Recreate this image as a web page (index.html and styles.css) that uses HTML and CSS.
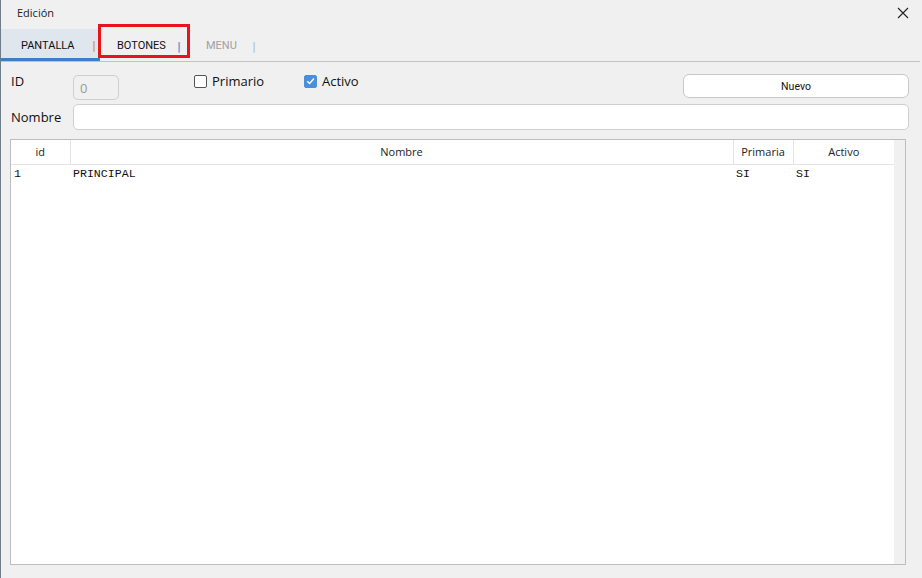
FILE: index.html
```html
<!DOCTYPE html>
<html lang="es">
<head>
  <meta charset="UTF-8">
  <title>Edición</title>
  <link rel="stylesheet" href="styles.css">
</head>
<body>
<div class="window">
  <div class="titlebar">
    <span class="title">Edición</span>
    <svg class="close" width="12" height="12" viewBox="0 0 12 12"><path d="M1 1 L11 11 M11 1 L1 11" stroke="#222" stroke-width="1.1" fill="none"/></svg>
  </div>

  <div class="tabs">
    <div class="tab tab-active"><span>PANTALLA</span><span class="sep sep-orange">|</span></div>
    <div class="tab"><span>BOTONES</span><span class="sep sep-blue">|</span></div>
    <div class="tab tab-off"><span>MENU</span><span class="sep sep-light">|</span></div>
    <div class="highlight"></div>
  </div>

  <div class="form">
    <div class="row row-top">
      <label class="lbl">ID</label>
      <input class="txt txt-id" type="text" value="0" disabled>
      <label class="check check-primario"><span class="box"></span>Primario</label>
      <label class="check"><span class="box box-on">
        <svg width="12" height="12" viewBox="0 0 12 12"><path d="M2.5 6.2 L5 8.7 L9.8 3.2" stroke="#fff" stroke-width="1.6" fill="none"/></svg>
      </span>Activo</label>
      <button class="btn">Nuevo</button>
    </div>
    <div class="row row-name">
      <label class="lbl">Nombre</label>
      <input class="txt txt-name" type="text">
    </div>
  </div>

  <div class="grid">
    <div class="grid-body">
      <table>
        <thead>
          <tr>
            <th class="c-id">id</th>
            <th class="c-name">Nombre</th>
            <th class="c-prim">Primaria</th>
            <th class="c-act">Activo</th>
          </tr>
        </thead>
        <tbody>
          <tr>
            <td>1</td>
            <td>PRINCIPAL</td>
            <td>SI</td>
            <td>SI</td>
          </tr>
        </tbody>
      </table>
    </div>
    <div class="scroll"></div>
  </div>
</div>
</body>
</html>
```

FILE: styles.css
```css
body {
  margin: 0;
  background: #f0f0f0;
  font-family: 'Open Sans', 'Noto Sans', sans-serif;
  color: #1a1a1a;
}

.window {
  width: 921px;
  height: 578px;
  border-left: 1px solid #6f7c8a;
  display: flex;
  flex-direction: column;
  background: #f0f0f0;
}

.titlebar {
  height: 29px;
  box-sizing: border-box;
  padding: 0 13px 4px 16px;
  display: flex;
  align-items: center;
  justify-content: space-between;
}

.title {
  font-size: 11px;
  color: #222;
}

.tabs {
  position: relative;
  height: 32px;
  display: flex;
  border-bottom: 1px solid #c3c3c3;
  margin-right: 2px;
}

.tab {
  display: flex;
  align-items: center;
  font-family: Roboto, 'Open Sans', sans-serif;
  font-size: 11px;
  font-weight: 400;
  color: #111;
  box-sizing: border-box;
  padding-top: 1px;
}

.tab:nth-child(1) {
  width: 99px;
  padding: 0 4px 0 20px;
  background: #dfe6ee;
  border-bottom: 3px solid #3c7fc4;
  padding-top: 3px;
}

.tab:nth-child(2) {
  width: 85px;
  padding-left: 17px;
  padding-right: 4px;
}

.tab:nth-child(3) {
  width: 75px;
  padding-left: 21px;
  padding-right: 4px;
}

.tab-off {
  color: #a0a0a0;
}

.sep {
  margin-left: auto;
  font-family: 'DejaVu Sans', sans-serif;
  font-size: 11px;
  font-weight: bold;
  line-height: 11px;
  margin-top: 1px;
}

.sep-orange { color: #cd9a52; }
.sep-blue { color: #5b95d0; }
.sep-light { color: #b0c8e2; }

.highlight {
  position: absolute;
  left: 97px;
  top: -5px;
  width: 86px;
  height: 28px;
  border: 3px solid #e8131d;
}

.form {
  padding: 12px 13px 0 10px;
}

.row {
  display: flex;
  align-items: flex-start;
}

.row-top {
  height: 30px;
}

.row-name {
  height: 26px;
  align-items: center;
}

.lbl {
  width: 62px;
  font-size: 13px;
  line-height: 14px;
  color: #111;
}

.txt {
  box-sizing: border-box;
  height: 26px;
  border: 1px solid #cfcfcf;
  border-radius: 5px;
  background: #fff;
  font-family: inherit;
  font-size: 13px;
  padding: 0 6px;
}

.txt-id {
  width: 46px;
  height: 25px;
  margin-top: 1px;
  background: #f0f0f0;
  color: #9a9a9a;
}

.txt-name {
  flex: 1;
}

.check {
  display: flex;
  align-items: center;
  font-size: 13px;
  line-height: 14px;
  color: #111;
}

.check-primario {
  margin-left: 75px;
  width: 110px;
}

.box {
  box-sizing: border-box;
  width: 13px;
  height: 13px;
  border: 1px solid #555;
  border-radius: 2px;
  background: #fff;
  margin-right: 5px;
  display: flex;
  align-items: center;
  justify-content: center;
}

.box-on {
  background: #4a90d9;
  border-color: #4a90d9;
}

.btn {
  margin-left: auto;
  width: 226px;
  height: 24px;
  border: 1px solid #c8c8c8;
  border-radius: 6px;
  background: #fff;
  font-family: Roboto, 'Open Sans', sans-serif;
  font-size: 10.5px;
  color: #111;
}

.grid {
  margin: 9px 16px 13px 9px;
  flex: 1;
  display: flex;
  border: 1px solid #bdbdbd;
  background: #fff;
}

.grid-body {
  flex: 1;
}

.scroll {
  width: 11px;
  background: #f0f0f0;
}

table {
  width: 100%;
  border-collapse: collapse;
  table-layout: fixed;
}

th {
  height: 24px;
  box-sizing: border-box;
  font-size: 11px;
  font-weight: normal;
  color: #222;
  border-bottom: 1px solid #e4e4e4;
  border-left: 1px solid #e4e4e4;
  padding: 0 0 1px 0;
}

th:first-child {
  border-left: none;
}

.c-id { width: 59px; }
.c-prim { width: 60px; }
.c-act { width: 101px; }

td {
  font-family: 'Liberation Mono', monospace;
  font-size: 11.6px;
  color: #111;
  padding: 2px 3px 0 3px;
  height: 14px;
}
```
